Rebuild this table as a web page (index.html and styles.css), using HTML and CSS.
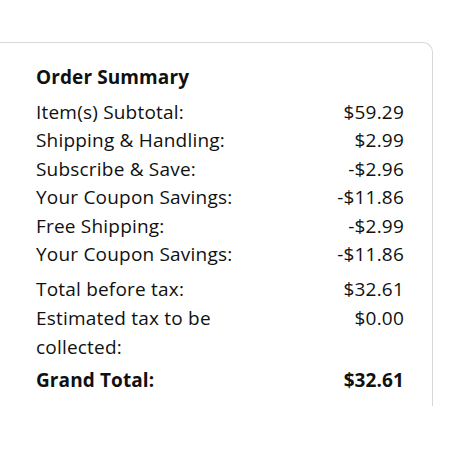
FILE: index.html
```html
<!DOCTYPE html>
<html>
<head>
<meta charset="utf-8">
<link rel="stylesheet" href="styles.css">
</head>
<body>
<div class="card">
  <h2 class="title">Order Summary</h2>
  <div class="group">
    <div class="row"><span class="label">Item(s) Subtotal:</span><span class="value">$59.29</span></div>
    <div class="row"><span class="label">Shipping &amp; Handling:</span><span class="value">$2.99</span></div>
    <div class="row"><span class="label">Subscribe &amp; Save:</span><span class="value">-$2.96</span></div>
    <div class="row"><span class="label">Your Coupon Savings:</span><span class="value">-$11.86</span></div>
    <div class="row"><span class="label">Free Shipping:</span><span class="value">-$2.99</span></div>
    <div class="row"><span class="label">Your Coupon Savings:</span><span class="value">-$11.86</span></div>
  </div>
  <div class="group group-tax">
    <div class="row"><span class="label">Total before tax:</span><span class="value">$32.61</span></div>
    <div class="row"><span class="label narrow">Estimated tax to be collected:</span><span class="value">$0.00</span></div>
  </div>
  <div class="row total"><span class="label">Grand Total:</span><span class="value">$32.61</span></div>
</div>
</body>
</html>
```

FILE: styles.css
```css
html, body {
  margin: 0;
  padding: 0;
  background: #ffffff;
}

body {
  font-family: "Open Sans", "Noto Sans", Arial, sans-serif;
  color: #0f1111;
  font-size: 19px;
  letter-spacing: 0.2px;
}

.card {
  margin-top: 42px;
  width: 433px;
  height: 364px;
  box-sizing: border-box;
  border-top: 1px solid #d5d9d9;
  border-right: 1px solid #d5d9d9;
  border-top-right-radius: 10px;
  padding: 20px 28px 0 36px;
}

.title {
  margin: 0 0 7px 0;
  font-size: 19px;
  font-weight: 700;
  line-height: 28px;
  letter-spacing: 0.1px;
}

.row {
  display: flex;
  justify-content: space-between;
  align-items: flex-start;
  line-height: 28.4px;
}

.label {
  flex: 0 1 auto;
}

.narrow {
  max-width: 200px;
  line-height: 29px;
}

.value {
  text-align: right;
}

.group-tax {
  margin-top: 7px;
}

.total {
  margin-top: 4px;
  font-weight: 700;
  letter-spacing: 0.1px;
}
```
